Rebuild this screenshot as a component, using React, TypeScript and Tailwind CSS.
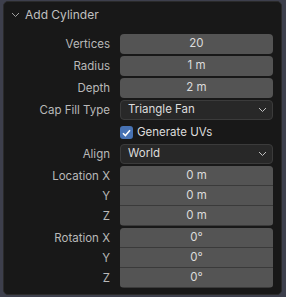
import React from "react";

const font = { fontFamily: "Inter, 'DejaVu Sans', sans-serif" };

function Label({ text }: { text: string }) {
  return (
    <div className="w-[106px] shrink-0 text-right text-[11.5px] leading-[20px] text-[#b9b9b9]">
      {text}
    </div>
  );
}

function NumField({ value }: { value: string }) {
  return (
    <div className="flex h-[20px] w-[153px] items-center justify-center rounded-[4px] bg-[#545454] text-[11.5px] text-[#dcdcdc]">
      {value}
    </div>
  );
}

function Chevron({ className }: { className?: string }) {
  return (
    <svg width="9" height="6" viewBox="0 0 9 6" className={className}>
      <path d="M1 1 L4.5 4.5 L8 1" fill="none" stroke="currentColor" strokeWidth="1" />
    </svg>
  );
}

function Dropdown({ value }: { value: string }) {
  return (
    <div className="flex h-[20px] w-[153px] items-center justify-between rounded-[4px] border border-[#3b3b3b] bg-[#282828] pl-[7px] pr-[5px] text-[11.5px] text-[#dcdcdc]">
      <span>{value}</span>
      <Chevron className="text-[#c0c0c0]" />
    </div>
  );
}

function Row({ label, children }: { label: string; children: React.ReactNode }) {
  return (
    <div className="flex h-[20px] items-center gap-[10px]">
      <Label text={label} />
      {children}
    </div>
  );
}

function Group({ labels, values }: { labels: string[]; values: string[] }) {
  return (
    <div className="flex gap-[10px]">
      <div className="flex flex-col">
        {labels.map((l) => (
          <Label key={l} text={l} />
        ))}
      </div>
      <div className="flex w-[153px] flex-col gap-[1px] overflow-hidden rounded-[4px] bg-[#3a3a3a]">
        {values.map((v, i) => (
          <div
            key={i}
            className="flex h-[19px] items-center justify-center bg-[#545454] text-[11.5px] text-[#dcdcdc]"
          >
            {v}
          </div>
        ))}
      </div>
    </div>
  );
}

export default function App() {
  return (
    <div className="h-[297px] w-[286px] bg-[#3d3f4c] pl-[3px] pt-[1px]" style={font}>
      <div className="h-[294px] w-[279px] rounded-[5px] border border-[#2a2a2a] bg-[#181818]">
        {/* header */}
        <div className="flex h-[24px] items-center gap-[5px] pl-[7px] pt-[2px] text-[12px] text-[#c0c0c0]">
          <Chevron className="text-[#a0a0a0]" />
          <span>Add Cylinder</span>
        </div>

        <div className="flex flex-col gap-[2px] pt-[8px]">
          <Row label="Vertices">
            <NumField value="20" />
          </Row>
          <Row label="Radius">
            <NumField value="1 m" />
          </Row>
          <Row label="Depth">
            <NumField value="2 m" />
          </Row>
          <Row label="Cap Fill Type">
            <Dropdown value="Triangle Fan" />
          </Row>
          <div className="flex h-[20px] items-center gap-[4px] pl-[116px] pt-[1px]">
            <div className="flex h-[13px] w-[13px] items-center justify-center rounded-[3px] bg-[#4772b3]">
              <svg width="9" height="8" viewBox="0 0 9 8">
                <path d="M1 4.2 L3.4 6.6 L8 1.2" fill="none" stroke="#ffffff" strokeWidth="1.5" />
              </svg>
            </div>
            <span className="text-[11.5px] text-[#dcdcdc]">Generate UVs</span>
          </div>
          <Row label="Align">
            <Dropdown value="World" />
          </Row>
          <Group labels={["Location X", "Y", "Z"]} values={["0 m", "0 m", "0 m"]} />
          <Group labels={["Rotation X", "Y", "Z"]} values={["0°", "0°", "0°"]} />
        </div>
      </div>
    </div>
  );
}
